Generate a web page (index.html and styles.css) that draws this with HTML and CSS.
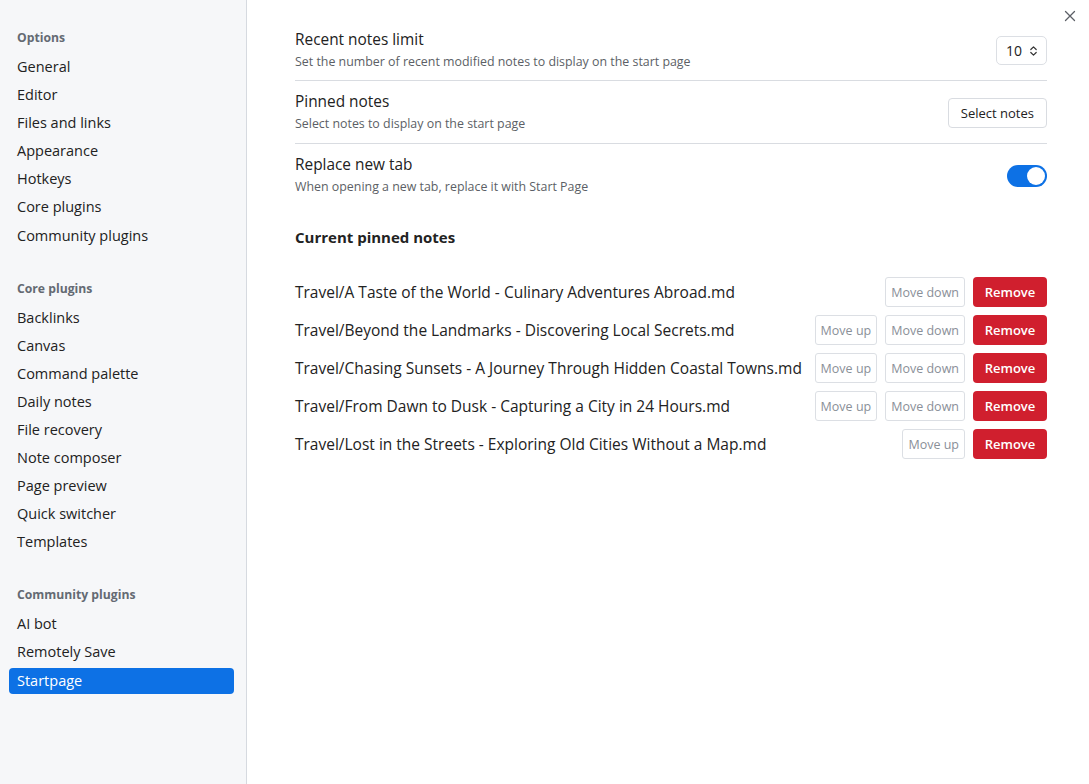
FILE: index.html
```html
<!DOCTYPE html>
<html>
<head>
<meta charset="utf-8">
<link rel="stylesheet" href="styles.css">
</head>
<body>
<div class="modal">
  <nav class="sidebar">
    <div class="group">
      <div class="group-title">Options</div>
      <div class="nav-item">General</div>
      <div class="nav-item">Editor</div>
      <div class="nav-item">Files and links</div>
      <div class="nav-item">Appearance</div>
      <div class="nav-item">Hotkeys</div>
      <div class="nav-item">Core plugins</div>
      <div class="nav-item">Community plugins</div>
    </div>
    <div class="group">
      <div class="group-title">Core plugins</div>
      <div class="nav-item">Backlinks</div>
      <div class="nav-item">Canvas</div>
      <div class="nav-item">Command palette</div>
      <div class="nav-item">Daily notes</div>
      <div class="nav-item">File recovery</div>
      <div class="nav-item">Note composer</div>
      <div class="nav-item">Page preview</div>
      <div class="nav-item">Quick switcher</div>
      <div class="nav-item">Templates</div>
    </div>
    <div class="group">
      <div class="group-title">Community plugins</div>
      <div class="nav-item">AI bot</div>
      <div class="nav-item">Remotely Save</div>
      <div class="nav-item active">Startpage</div>
    </div>
  </nav>
  <main class="content">
    <div class="close" aria-label="Close">
      <svg width="12" height="12" viewBox="0 0 12 12"><path d="M1.5 1.5L10.5 10.5M10.5 1.5L1.5 10.5" stroke="#5c5f66" stroke-width="1.3" fill="none" stroke-linecap="round"/></svg>
    </div>
    <div class="setting">
      <div class="setting-info">
        <div class="setting-name">Recent notes limit</div>
        <div class="setting-desc">Set the number of recent modified notes to display on the start page</div>
      </div>
      <div class="dropdown">
        <span>10</span>
        <svg width="9" height="12" viewBox="0 0 9 12"><path d="M1.8 4.5L4.5 1.8L7.2 4.5M1.8 7.5L4.5 10.2L7.2 7.5" stroke="#333" stroke-width="1.2" fill="none" stroke-linecap="round" stroke-linejoin="round"/></svg>
      </div>
    </div>
    <div class="setting">
      <div class="setting-info">
        <div class="setting-name">Pinned notes</div>
        <div class="setting-desc">Select notes to display on the start page</div>
      </div>
      <button class="btn">Select notes</button>
    </div>
    <div class="setting last">
      <div class="setting-info">
        <div class="setting-name">Replace new tab</div>
        <div class="setting-desc">When opening a new tab, replace it with Start Page</div>
      </div>
      <div class="toggle"><div class="knob"></div></div>
    </div>
    <h3 class="heading">Current pinned notes</h3>
    <div class="pinned">
      <div class="pin-row">
        <div class="pin-name">Travel/A Taste of the World - Culinary Adventures Abroad.md</div>
        <div class="pin-actions"><button class="small">Move down</button><button class="remove">Remove</button></div>
      </div>
      <div class="pin-row">
        <div class="pin-name">Travel/Beyond the Landmarks - Discovering Local Secrets.md</div>
        <div class="pin-actions"><button class="small">Move up</button><button class="small">Move down</button><button class="remove">Remove</button></div>
      </div>
      <div class="pin-row">
        <div class="pin-name">Travel/Chasing Sunsets - A Journey Through Hidden Coastal Towns.md</div>
        <div class="pin-actions"><button class="small">Move up</button><button class="small">Move down</button><button class="remove">Remove</button></div>
      </div>
      <div class="pin-row">
        <div class="pin-name">Travel/From Dawn to Dusk - Capturing a City in 24 Hours.md</div>
        <div class="pin-actions"><button class="small">Move up</button><button class="small">Move down</button><button class="remove">Remove</button></div>
      </div>
      <div class="pin-row">
        <div class="pin-name">Travel/Lost in the Streets - Exploring Old Cities Without a Map.md</div>
        <div class="pin-actions"><button class="small">Move up</button><button class="remove">Remove</button></div>
      </div>
    </div>
  </main>
</div>
</body>
</html>
```
FILE: styles.css
```css
* { box-sizing: border-box; }
html, body { margin: 0; padding: 0; height: 100%; }
body {
  font-family: "Open Sans", "Noto Sans", sans-serif;
  color: #222;
  background: #fff;
}
.modal {
  display: flex;
  height: 784px;
  width: 1089px;
}
.sidebar {
  width: 247px;
  flex: none;
  background: #f6f7f9;
  border-right: 1px solid #d6dae0;
  padding: 29px 12px 0 9px;
}
.group { margin-bottom: 31px; }
.group-title {
  font-size: 12.2px;
  font-weight: 700;
  color: #646a73;
  line-height: 18px;
  padding-left: 8px;
  margin-bottom: 7px;
}
.nav-item {
  font-size: 14.5px;
  line-height: 26px;
  height: 26px;
  margin-bottom: 2.1px;
  padding-left: 8px;
  color: #222;
  border-radius: 4px;
}
.nav-item.active {
  background: #0d71e5;
  color: #fff;
}
.content {
  flex: 1;
  position: relative;
  padding: 19px 42px 0 48px;
}
.close {
  position: absolute;
  top: 10px;
  right: 13px;
  width: 12px;
  height: 12px;
  display: flex;
}
.setting {
  display: flex;
  align-items: center;
  justify-content: space-between;
  padding: 11px 0 10px;
  border-bottom: 1px solid #d9dce1;
}
.setting:nth-child(2) { padding-bottom: 9px; }
.setting.last { border-bottom: none; }
.setting-name {
  font-size: 15.4px;
  line-height: 20px;
  color: #222;
}
.setting-desc {
  font-size: 12.4px;
  line-height: 18px;
  color: #5c5f66;
  margin-top: 3px;
}
.dropdown {
  display: flex;
  align-items: center;
  gap: 7px;
  height: 29px;
  width: 51px;
  padding: 0 8px 0 9px;
  border: 1px solid #dcdfe4;
  border-radius: 5px;
  font-size: 14px;
  color: #222;
}
.btn {
  font-family: inherit;
  font-size: 13px;
  height: 30px;
  padding: 0 12px;
  background: #fff;
  border: 1px solid #d9dce1;
  border-radius: 4px;
  color: #222;
}
.toggle {
  width: 40px;
  height: 22px;
  border-radius: 11px;
  background: #0d71e5;
  position: relative;
}
.knob {
  position: absolute;
  right: 2px;
  top: 2px;
  width: 18px;
  height: 18px;
  border-radius: 50%;
  background: #fff;
}
.heading {
  font-size: 15px;
  font-weight: 700;
  line-height: 20px;
  margin: 21px 0 30px;
  color: #222;
}
.pinned {
  display: flex;
  flex-direction: column;
  gap: 8px;
}
.pin-row {
  display: flex;
  align-items: center;
  justify-content: space-between;
  height: 30px;
}
.pin-name {
  font-size: 15.5px;
  color: #222;
  white-space: nowrap;
}
.pin-actions {
  display: flex;
  gap: 8px;
}
.small {
  font-family: inherit;
  font-size: 12.5px;
  height: 30px;
  padding: 0 5px;
  background: #fff;
  border: 1px solid #dcdfe4;
  border-radius: 3px;
  color: #8a8f98;
}
.remove {
  font-family: inherit;
  font-size: 13px;
  font-weight: 600;
  height: 30px;
  width: 74px;
  background: #d01f2e;
  border: none;
  border-radius: 4px;
  color: #fff;
}
```
